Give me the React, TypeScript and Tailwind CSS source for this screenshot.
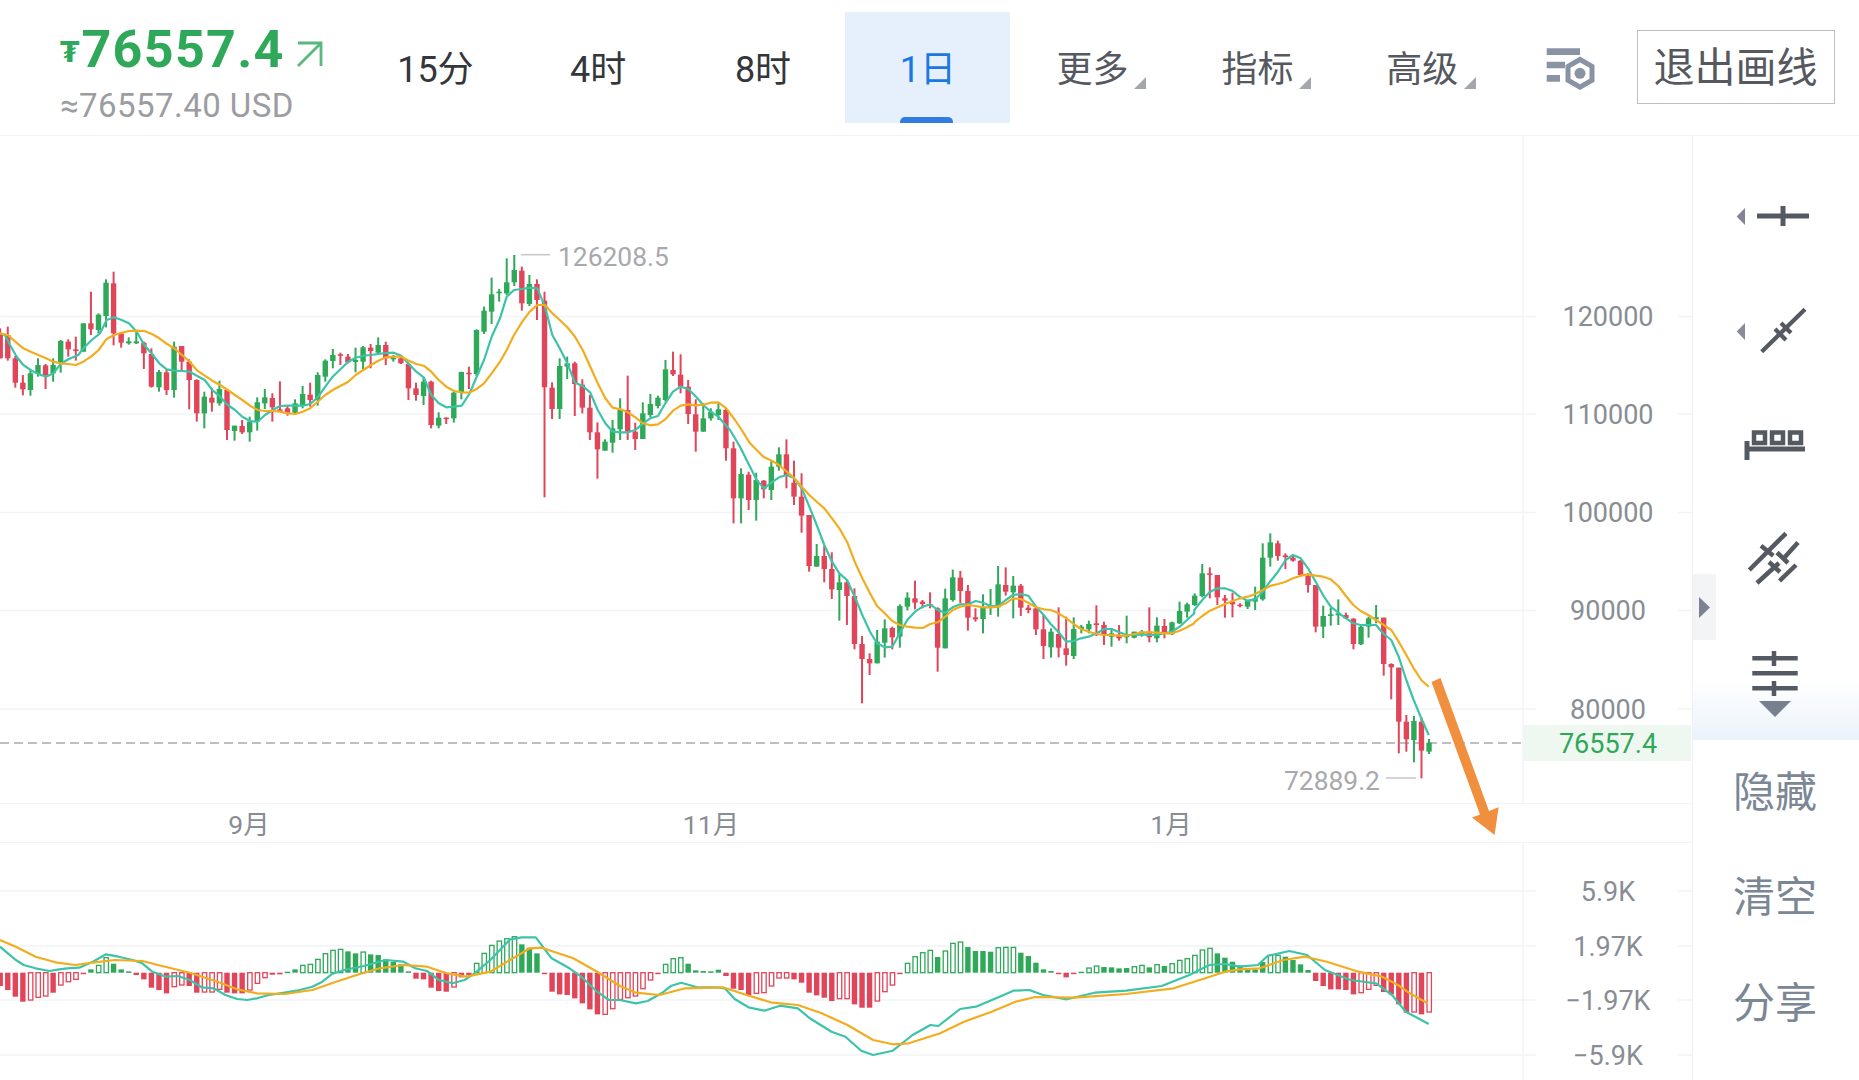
import React from 'react';

type Candle = [number, number, number, number, number];
type Bar = [number, number];

const STEP = 7.56;
const RED = '#e0455a';
const GREEN = '#2fa85a';
const TEAL = '#3cc3a8';
const ORANGE = '#f2ad1e';

// dir (1 up, 0 down), high, body top, body bottom, low: y read off the zoomed crops (3x)
const segA: Candle[] = [
  [0,265,280,355,355],[0,260,285,355,362],[0,348,355,428,443],[0,405,428,448,466],[1,390,400,450,467],
  [1,355,375,402,410],[0,372,376,405,447],[1,355,375,400,425],[1,300,303,370,398],[0,298,305,328,350],
  [0,290,328,333,362],[1,250,250,335,335],[0,155,250,268,285],[1,220,224,270,280],[1,118,128,228,262],
  [0,95,130,280,316],[0,280,280,308,323],[1,292,304,310,314],[1,275,304,310,312],[0,305,308,340,387],
  [0,325,342,440,443],[1,390,396,442,455],[0,390,397,450,465],[1,305,320,450,473],[0,318,318,365,390],
  [0,358,365,420,508],[0,418,420,520,545],[1,455,470,520,565],[0,445,473,488,515],[1,422,447,490,497],
  [0,448,450,570,600],[1,557,557,573,602],[0,540,558,577,582],[1,530,545,577,605],[1,472,487,545,572],
  [1,447,472,490,507],[0,460,474,502,545],[0,424,508,512,515],[0,498,505,518,527],[1,478,490,518,522],
  [1,438,462,495,505],[0,428,464,480,500],[1,397,405,480,497],[1,358,362,410,425],[1,327,345,363,385],
  [0,338,343,347,375],[0,342,350,367,370],[1,323,360,366,397],[1,318,322,365,388],[0,312,323,333,385],
  [1,292,315,338,345],[0,305,315,355,375],[1,345,353,358,365],[0,348,355,370,372],[0,368,372,445,480],
  [0,428,445,465,482],[1,412,425,468,495],[0,422,425,555,565],[1,517,533,557,565],[0,532,533,537,552],
  [1,455,458,535,548],[1,395,396,458,478],[0,380,398,403,447],[1,268,270,402,408],[1,200,212,275,282],
  [1,113,163,215,252],[1,147,155,160,185],
];
const segB: Candle[] = [
  [1,55,127,160,165],[1,45,90,127,138],[0,80,92,190,212],[1,105,132,192,198],[0,118,132,180,240],
  [0,155,182,442,772],[0,427,443,507,537],[1,355,378,507,537],[1,350,370,380,417],[0,365,370,432,528],
  [0,418,434,503,520],[0,465,503,577,600],[0,547,577,628,716],[1,598,605,632,632],[1,540,565,608,638],
  [1,475,508,568,600],[0,407,510,575,600],[0,548,575,597,630],[1,487,520,597,597],[1,462,492,525,532],
  [1,467,473,498,505],[1,360,388,480,485],[0,335,390,403,408],[0,343,404,440,460],[0,420,440,522,552],
  [0,478,523,575,635],[1,490,535,575,575],[1,505,515,535,542],[1,490,508,525,540],[0,505,510,625,662],
  [0,605,625,775,850],[1,685,702,775,850],[0,695,704,780,810],[1,698,720,780,842],[0,720,722,748,775],
  [1,660,680,750,780],[1,622,643,680,692],[0,598,643,708,745],[0,662,728,770,795],[0,700,770,827,878],
];
const segC: Candle[] = [
  [0,285,285,438,455],[1,372,408,440,440],[0,378,408,447,487],[0,397,447,508,537],[1,463,487,510,602],
  [0,480,487,528,615],[0,505,528,672,688],[0,648,672,717,850],[0,700,717,730,765],[1,630,665,730,730],
  [1,598,625,668,713],[0,620,624,652,688],[1,553,558,650,683],[1,517,533,560,571],[0,482,535,548,568],
  [0,540,545,552,565],[0,517,553,558,565],[0,562,565,683,755],[1,506,535,685,685],[1,449,472,540,545],
  [0,453,473,513,550],[0,495,513,593,632],[0,565,592,598,605],[1,523,560,597,640],[1,507,555,562,585],
  [1,438,493,562,590],[0,442,495,515,527],[1,468,497,517,595],[0,492,497,563,588],[0,555,563,570,580],
  [0,560,565,628,645],[0,585,628,678,717],[1,625,635,682,713],[0,562,642,683,712],[0,590,685,705,737],
  [1,592,627,708,717],[1,615,620,627,640],[1,602,612,628,640],[0,556,610,615,648],[0,605,615,645,675],
  [1,628,640,650,680],[0,615,645,655,662],[1,587,645,652,670],[1,635,635,653,655],[1,630,635,645,650],
  [0,562,635,652,667],[1,592,617,655,667],[0,597,618,640,655],[1,605,607,643,645],[1,545,573,610,612],
  [1,548,553,575,593],[1,520,527,555,558],
];
const segD: Candle[] = [
  [1,162,190,258,262],[0,172,190,193,265],[0,195,195,262,285],[0,255,265,272,323],[0,248,275,283,322],
  [0,280,284,288,292],[1,270,272,290,297],[1,230,265,275,300],[1,100,143,268,272],[1,70,97,143,170],
  [0,92,100,138,152],[0,130,136,141,177],[0,135,143,152,155],[0,150,152,195,200],[0,190,197,225,248],
  [0,225,225,350,367],[1,287,318,350,384],[1,293,313,318,347],[1,268,310,316,345],[0,308,315,325,325],
  [0,325,326,402,418],[1,347,350,403,405],[1,320,325,350,383],[1,285,322,328,340],[0,323,323,462,497],
  [0,460,462,472,568],[0,473,473,635,730],[0,615,635,688,725],[1,618,633,690,757],[0,622,635,722,805],
  [1,687,698,725,732],
];
const toY = (seg: Candle[], oy: number): Candle[] =>
  seg.map(([d, h, t, b, l]) => [d, oy + h / 3, oy + t / 3, oy + b / 3, oy + l / 3]);
const candles: Candle[] = [...toY(segA, 240), ...toY(segB, 240), ...toY(segC, 420), ...toY(segD, 510)];

// polyline pieces: points read in crop coordinates, mapped back to page coordinates
const path = (pts: number[], ox: number, sx: number, oy: number) => {
  const out: string[] = [];
  for (let i = 0; i < pts.length; i += 2) {
    out.push(`${(ox + pts[i] / sx).toFixed(1)},${(oy + pts[i + 1] / 3).toFixed(1)}`);
  }
  return out.join(' ');
};

const tealMain = [
  path([0,280,15,285,30,315,50,350,70,375,95,392,115,402,138,410,160,400,182,372,205,358,235,345,250,325,275,300,300,280,320,240,342,232,365,240,387,250,410,275,433,315,456,342,478,370,500,388,523,392,546,393,569,395,592,408,614,420,637,450,660,470,683,495,705,510,727,530,750,543,773,545,795,525,818,510,840,498,863,497,886,497,908,497,931,492,953,472,976,440,998,410,1022,387,1045,365,1067,353,1090,347,1113,345,1135,342,1158,339,1181,338,1204,347,1226,372,1249,395,1271,412,1294,465,1316,490,1339,502,1362,500,1385,497,1408,462,1430,410,1452,360,1475,290,1500,235], 0, 3, 240),
  path([200,170,222,150,247,147,269,143,292,145,315,200,337,285,359,325,382,370,405,428,428,438,451,458,473,510,496,550,518,575,541,577,564,577,586,570,609,550,631,535,654,528,676,490,699,455,722,440,745,447,768,470,790,495,812,515,835,530], 440, 3, 240),
  path([90,30,120,80,150,140,170,180,192,205,215,187,237,172,260,165,283,175,305,205,328,260,350,315,373,375,396,425,418,460,441,480,464,530,487,585,510,635,531,670,554,682,577,680,599,640,622,600,645,575,668,560,691,553,713,570,736,578,758,562,781,553,804,553,827,543,849,548,872,558,894,558,917,540,939,525,962,522,985,527,1008,560,1031,585,1052,612,1076,637,1099,665,1121,663,1143,655,1166,650,1190,640,1213,627,1235,627,1258,637,1280,645,1303,645,1326,643,1349,645,1371,645,1394,640,1416,635,1439,620,1461,600,1483,580], 700, 3, 420),
  path([133,300,157,270,180,245,203,235,225,235,248,243,271,262,293,272,316,268,338,245,360,215,384,185,407,150,429,135,452,145,474,175,497,215,519,255,542,290,565,308,588,325,610,340,632,345,655,345,678,345,701,372,724,390,746,440,769,510,791,570,814,625,836,675], 1150, 3, 510),
].join(' ');

const orangeMain = [
  path([0,280,23,285,46,305,70,325,92,335,115,345,138,355,160,365,182,370,205,372,228,375,250,365,273,350,296,330,319,298,342,285,365,278,387,273,410,272,433,273,456,282,478,295,501,312,523,325,546,345,569,365,592,392,614,407,637,422,660,435,683,450,705,465,727,480,750,497,773,510,795,513,818,513,840,515,863,520,886,522,908,515,931,505,953,485,976,465,998,450,1022,437,1045,425,1067,405,1090,390,1113,375,1135,362,1158,352,1181,350,1204,350,1226,362,1249,372,1271,377,1294,395,1316,420,1339,440,1362,453,1385,457,1408,458,1430,447,1452,430,1475,400,1500,365], 0, 3, 240),
  path([200,330,222,285,247,245,269,215,292,195,315,195,337,220,359,240,382,262,405,290,428,330,451,380,473,430,496,475,518,503,541,508,564,517,586,532,609,550,631,556,654,553,676,538,699,512,722,497,745,493,768,496,790,494,812,488,835,487,859,505], 440, 3, 240),
  path([105,0,125,30,150,70,175,95,190,110,215,122,237,135,260,155,283,175,305,200,328,225,350,245,373,265,396,295,418,325,441,365,464,425,487,475,510,520,531,558,554,580,577,603,599,615,622,620,645,623,668,624,691,612,713,607,736,590,758,570,781,560,804,555,827,558,849,562,872,562,894,560,917,550,939,535,962,537,985,548,1008,562,1031,568,1052,570,1076,580,1099,595,1121,612,1143,627,1166,635,1190,642,1213,645,1235,645,1258,647,1280,647,1303,642,1326,637,1349,637,1371,638,1394,640,1416,640,1439,632,1461,622,1483,610], 700, 3, 420),
  path([133,337,157,318,180,302,203,292,225,282,248,273,271,265,293,260,316,252,338,240,360,228,384,222,407,215,429,205,452,197,474,193,497,197,519,200,542,208,565,228,588,258,610,285,632,303,655,315,678,330,701,345,724,360,746,395,769,435,791,475,814,510,836,530], 1150, 3, 510),
].join(' ');

const tealMacd = [
  path([0,140,20,160,40,180,60,195,90,205,125,213,150,208,170,205,200,203,235,185,268,163,300,170,335,180,360,190,385,215,420,230,450,228,480,240,510,262,540,265,570,285,600,297,625,300,650,295,680,285,720,278,750,272,790,260,815,245,840,222,870,210,920,198,975,180,1020,185,1050,205,1080,213,1110,240,1145,250,1175,240,1200,220,1240,180,1290,118,1320,112,1355,112,1395,175,1440,205,1470,230,1510,275,1540,300,1568,300], 0, 2.529, 900),
  path([40,310,70,303,105,280,130,257,155,248,195,262,245,262,265,265,290,297,325,322,365,332,405,317,450,325,480,355,535,395,570,410,610,452,640,465,690,452,740,405,785,375,805,378,860,327,900,320,960,290,995,272,1035,270,1070,285,1130,298,1200,278,1280,272,1370,258,1440,225,1490,195,1530,192,1568,200], 620, 2.529, 900),
  path([45,795,70,768,125,753,170,765,215,810,280,840,345,850,385,885,420,935,478,972], 1240, 2.533, 700),
].join(' ');

const orangeMacd = [
  path([0,120,40,140,90,170,140,187,190,195,240,187,290,180,360,183,410,198,480,218,550,245,600,268,650,280,720,282,790,270,850,245,910,222,960,205,1020,195,1080,200,1130,220,1180,230,1240,215,1290,180,1340,145,1370,143,1450,175,1510,215,1568,258], 0, 2.529, 900),
  path([40,278,100,285,165,265,260,262,320,285,385,308,450,315,510,340,575,375,640,420,690,433,730,430,810,400,870,365,940,335,1000,305,1050,291,1150,293,1280,282,1400,265,1480,235,1530,215,1568,208], 620, 2.529, 900),
  path([50,805,110,780,165,770,220,785,300,815,360,830,400,855,430,880,475,910], 1240, 2.533, 700),
].join(' ');

// histogram height in crop px (positive up, green), second value 1 = hollow
const bars: Bar[] = [
  [-40,0],[-52,0],[-72,0],[-87,0],[-82,1],[-74,1],[-70,1],[-60,0],[-37,1],[-27,1],[-20,1],[-3,0],[10,0],[22,1],[45,1],[27,0],[10,0],[4,0],[-7,0],[-20,0],
  [-45,0],[-52,0],[-62,0],[-42,1],[-37,1],[-40,0],[-60,0],[-58,1],[-58,1],[-50,1],[-60,0],[-62,0],[-62,0],[-52,1],[-32,1],[-15,1],[-6,0],[-5,0],[3,0],[10,0],
  [22,1],[25,1],[40,1],[57,1],[67,1],[70,1],[64,0],[58,0],[62,1],[55,0],[53,0],[40,0],[32,0],[25,0],[4,0],[-18,0],[-20,0],[-45,0],[-55,0],[-57,0],
  [-43,1],[-14,0],[-8,0],[28,1],[58,1],[82,1],[95,1],[102,1],[108,1],[85,0],[75,0],[58,0],[-4,0],[-57,0],[-65,0],[-67,0],[-77,0],[-92,0],[-110,0],[-125,0],
  [-125,1],[-108,1],[-80,1],[-75,1],[-70,1],[-48,1],[-22,1],[-4,0],[25,1],[42,1],[45,1],[27,0],[7,0],[5,0],[4,0],[9,0],[-10,0],[-48,0],[-52,0],[-68,0],
  [-62,1],[-60,1],[-40,1],[-16,1],[-16,1],[-20,0],[-30,0],[-60,0],[-68,0],[-75,0],[-85,0],[-78,1],[-78,1],[-95,0],[-105,0],[-105,0],[-85,1],[-57,1],[-37,1],[-4,0],
  [28,1],[48,1],[60,1],[67,1],[47,0],[65,1],[88,1],[92,1],[77,0],[65,0],[65,0],[63,0],[75,1],[76,1],[76,1],[60,0],[50,0],[30,0],[10,0],[5,0],
  [-3,0],[-14,0],[-4,0],[3,0],[14,1],[20,1],[17,0],[16,0],[13,0],[14,0],[18,1],[22,1],[16,0],[24,1],[20,0],[27,1],[37,1],[42,1],[52,1],[68,1],
  [73,1],[58,0],[45,0],[33,0],[22,0],[12,0],[10,0],[32,0],[52,1],[52,1],[48,0],[38,0],[25,0],[8,0],[-25,0],[-40,0],[-50,0],[-50,0],[-52,0],[-65,0],
  [-60,1],[-50,1],[-38,1],[-58,0],[-65,0],[-95,0],[-120,0],[-118,1],[-125,0],[-118,1],
];

const priceTicks: [string, number][] = [['120000', 316.5], ['110000', 414], ['100000', 512.5], ['90000', 610.5], ['80000', 709]];
const macdTicks: [string, number][] = [['5.9K', 891], ['1.97K', 946], ['-1.97K', 1000], ['-5.9K', 1055]];

function GridRow({ y }: { y: number }) {
  return (
    <g stroke="#f2f3f5" strokeWidth="1.5">
      <line x1="0" x2="1536" y1={y} y2={y} />
      <line x1="1678" x2="1692" y1={y} y2={y} />
    </g>
  );
}

function AxisLabel({ y, children }: { y: number; children: React.ReactNode }) {
  return (
    <text x="1608" y={y + 9.5} textAnchor="middle" className="fill-[#888d94] text-[27px]">
      {children}
    </text>
  );
}

function MainChart() {
  return (
    <svg viewBox="0 136 1692 667" className="block h-[667px] w-[1692px] shrink-0">
      {priceTicks.map(([, y]) => (
        <GridRow key={y} y={y} />
      ))}
      <line x1="1523" x2="1523" y1="136" y2="803" stroke="#f2f3f5" strokeWidth="1.5" />
      {priceTicks.map(([label, y]) => (
        <AxisLabel key={label} y={y}>
          {label}
        </AxisLabel>
      ))}
      <rect x="1523" y="725" width="168" height="36" fill="#eef8f1" />
      <text x="1608" y="753" textAnchor="middle" className="fill-[#2fa85a] text-[27px]">
        76557.4
      </text>
      <line x1="0" x2="1523" y1="743" y2="743" stroke="#a9abae" strokeWidth="1.5" strokeDasharray="9 5" />
      {candles.map(([d, h, t, b, l], i) => {
        const x = i * STEP + 0.2;
        const color = d ? GREEN : RED;
        return (
          <g key={i} fill={color}>
            <rect x={x - 1} y={h} width="2" height={l - h} />
            <rect x={x - 2.7} y={t} width="5.4" height={Math.max(b - t, 1.5)} />
          </g>
        );
      })}
      <polyline points={tealMain} fill="none" stroke={TEAL} strokeWidth="2.2" strokeLinejoin="round" />
      <polyline points={orangeMain} fill="none" stroke={ORANGE} strokeWidth="2.2" strokeLinejoin="round" />
      <line x1="521" x2="550" y1="254.7" y2="254.7" stroke="#c4c6c9" strokeWidth="1.5" />
      <text x="558" y="266" className="fill-[#a7a9ad] text-[26.4px]">
        126208.5
      </text>
      <text x="1284" y="790" className="fill-[#a7a9ad] text-[26.4px]">
        72889.2
      </text>
      <line x1="1386" x2="1416" y1="778" y2="778" stroke="#c4c6c9" strokeWidth="1.5" />
    </svg>
  );
}

function MacdChart() {
  const zero = 972.7;
  return (
    <svg viewBox="0 843 1692 237" className="block h-[237px] w-[1692px] shrink-0">
      {macdTicks.map(([, y]) => (
        <GridRow key={y} y={y} />
      ))}
      <line x1="1523" x2="1523" y1="843" y2="1080" stroke="#f2f3f5" strokeWidth="1.5" />
      {macdTicks.map(([label, y]) => (
        <AxisLabel key={label} y={y}>
          {label.replace('-', '\u2212')}
        </AxisLabel>
      ))}
      {bars.map(([v, hollow], i) => {
        const x = i * STEP + 0.2;
        const color = v > 0 ? GREEN : RED;
        const len = Math.abs(v) / 3;
        const y = v > 0 ? zero - len : zero;
        return hollow ? (
          <rect key={i} x={x - 2} y={y} width="4.4" height={len} fill="none" stroke={color} strokeWidth="1.3" />
        ) : (
          <rect key={i} x={x - 2.7} y={y} width="5.4" height={Math.max(len, 1.5)} fill={color} />
        );
      })}
      <polyline points={tealMacd} fill="none" stroke={TEAL} strokeWidth="2.2" strokeLinejoin="round" />
      <polyline points={orangeMacd} fill="none" stroke={ORANGE} strokeWidth="2.2" strokeLinejoin="round" />
    </svg>
  );
}

function Tab({ label, active, menu, first }: { label: string; active?: boolean; menu?: boolean; first?: boolean }) {
  return (
    <div
      className={`relative flex h-[111px] w-[164.8px] items-center justify-center text-[36px] ${
        active ? 'bg-[#e5f0fc] text-[#1a78e2]' : menu ? 'text-[#55595f]' : 'text-[#33363a]'
      } ${first ? 'pl-[4px]' : ''}`}
    >
      <span className="relative top-[2px]">{label}</span>
      {menu && (
        <svg viewBox="0 0 12 12" className="absolute left-[124px] top-[65px] h-[12px] w-[12px]">
          <path d="M12 0V12H0Z" fill="#a3a6aa" />
        </svg>
      )}
      {active && <div className="absolute bottom-0 left-[55px] h-[6px] w-[53px] rounded-t-[5px] bg-[#2f7de1]" />}
    </div>
  );
}

function ToolIcon({ y, children }: { y: number; children: React.ReactNode }) {
  return (
    <svg viewBox={`1693 ${y} 166 114`} className="block h-[114px] w-[166px] shrink-0">
      <g stroke="#555a62" strokeWidth="5" fill="none">
        {children}
      </g>
    </svg>
  );
}

export default function App() {
  return (
    <div className="relative h-[1080px] w-[1859px] overflow-hidden bg-white font-['Roboto','Noto_Sans_CJK_SC',sans-serif]">
      {/* top bar */}
      <div className="flex h-[136px] items-start border-b border-[#f3f4f6] pt-[12px]">
        <div className="w-[351px] shrink-0 pl-[60px] pt-[11px]">
          <div className="flex items-center text-[#2fa85a]">
            <span className="relative top-[3px] font-['DejaVu_Sans'] text-[28px] font-bold">₮</span>
            <span className="ml-[2px] text-[52px] font-bold leading-[54px] tracking-[1.3px]">76557.4</span>
            <svg viewBox="0 0 28 28" className="relative top-[4px] ml-[10px] h-[28px] w-[28px]">
              <path d="M3 3H26V26M26 3L3 26" fill="none" stroke="#59b87b" strokeWidth="2.8" />
            </svg>
          </div>
          <div className="mt-[10px] text-[33px] leading-[38px] tracking-[0.45px] text-[#9b9da0]">≈76557.40 USD</div>
        </div>
        <Tab label="15分" first />
        <Tab label="4时" />
        <Tab label="8时" />
        <Tab label="1日" active />
        <Tab label="更多" menu />
        <Tab label="指标" menu />
        <Tab label="高级" menu />
        <svg viewBox="1540 40 60 50" className="ml-[35px] mt-[28px] h-[50px] w-[60px] shrink-0">
          <path d="M1546.7 48.3H1580V55H1546.7ZM1546.7 61.7H1565V68.3H1546.7ZM1546.7 75H1560V81.7H1546.7Z" fill="#8a93a3" />
          <path d="M1580 59.5L1592 66.4V80.2L1580 87.1L1568 80.2V66.4Z" fill="none" stroke="#8a93a3" strokeWidth="5" />
          <circle cx="1580" cy="73.3" r="5.5" fill="#8a93a3" />
        </svg>
        <div className="ml-[37px] mt-[18px] flex h-[74px] w-[198px] items-center justify-center border border-[#bdbfc2] text-[41px] text-[#55595f]">
          <span className="relative top-[2px]">退出画线</span>
        </div>
      </div>

      <div className="flex h-[944px]">
        {/* chart column */}
        <div className="flex w-[1692px] shrink-0 flex-col">
          <MainChart />
          <div className="relative h-[40px] border-y border-[#f2f3f5] text-[26.5px] text-[#888d94]">
            <span className="absolute left-[249px] top-[1px] -translate-x-1/2">9月</span>
            <span className="absolute left-[711px] top-[1px] -translate-x-1/2">11月</span>
            <span className="absolute left-[1171px] top-[1px] -translate-x-1/2">1月</span>
          </div>
          <MacdChart />
        </div>

        {/* right toolbar */}
        <div className="relative flex flex-1 flex-col border-l border-[#eef0f2]">
          <div className="flex h-[604px] shrink-0 flex-col bg-[linear-gradient(to_bottom,#ffffff_0%,#ffffff_90%,#eaf3fb_100%)] pt-[23px]">
            <ToolIcon y={159}>
              <path d="M1745 208V225L1736.7 216.5Z" fill="#7f8498" stroke="none" />
              <path d="M1757 216H1809M1783 206V226" />
            </ToolIcon>
            <ToolIcon y={273}>
              <path d="M1745 323V340L1736.7 331.5Z" fill="#878c96" stroke="none" />
              <path d="M1761.7 351.7L1805 309.3M1775 329L1786 340M1781 323L1791 333" strokeWidth="4.2" />
            </ToolIcon>
            <ToolIcon y={387}>
              <path d="M1747 441V460M1747 449H1805" />
              <path d="M1754 432.5H1765V443H1754ZM1772 432.5H1783V443H1772ZM1790 432.5H1801V443H1790Z" strokeWidth="4.5" />
            </ToolIcon>
            <ToolIcon y={501}>
              <path d="M1749.3 570L1786 533.3M1761 545.7L1773.3 555.7M1757 583L1779 563M1769 562L1780 572M1784 558L1798 542.5M1777 552.5L1788 563M1779.5 581L1796 565" strokeWidth="4.5" />
            </ToolIcon>
            <ToolIcon y={615}>
              <path d="M1752.3 658.3H1797.7M1752.3 673.3H1797.7M1752.3 688.3H1797.7M1774 651V666M1774 681V696" strokeWidth="4.5" />
              <path d="M1759 701H1791L1775 717Z" fill="#77808f" stroke="none" />
            </ToolIcon>
          </div>
          <div className="flex flex-1 flex-col pb-[24px] pr-[2px] text-[42px] text-[#7c8795]">
            <div className="flex flex-1 items-center justify-center">隐藏</div>
            <div className="flex flex-1 items-center justify-center">清空</div>
            <div className="flex flex-1 items-center justify-center">分享</div>
          </div>
          {/* collapse handle */}
          <div className="absolute left-0 top-[438px] flex h-[66px] w-[23px] items-center justify-center bg-[#f3f4f6]">
            <svg viewBox="0 0 11 21" className="h-[21px] w-[11px]">
              <path d="M0 0L11 10.5L0 21Z" fill="#7b8296" />
            </svg>
          </div>
        </div>
      </div>

      {/* hand-drawn arrow on top of the chart */}
      <svg viewBox="0 0 1859 1080" className="pointer-events-none absolute left-0 top-0 h-[1080px] w-[1859px]">
        <path d="M1431.5 682L1440.5 678L1489 811L1498.6 807.3L1494.6 835L1472 817.5L1480 814.5Z" fill="#f0903f" />
      </svg>
    </div>
  );
}
